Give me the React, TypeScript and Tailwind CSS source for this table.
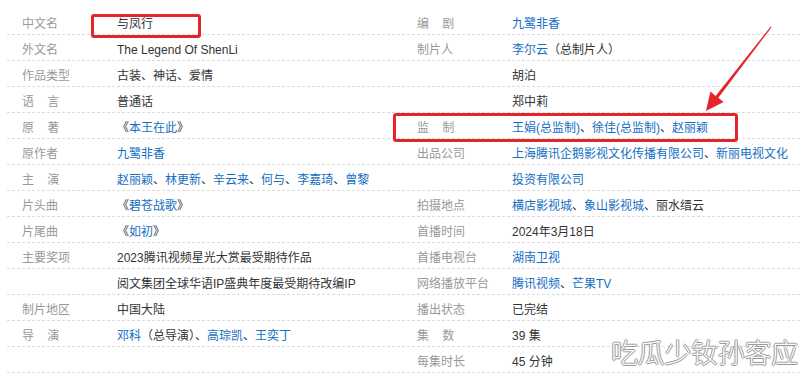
import React from "react";

type Seg = { t: string; link?: boolean };
type Row = { label?: string; value?: Seg[] };

const L = (t: string): Seg => ({ t, link: true });
const T = (t: string): Seg => ({ t });

const sp = "\u00a0\u00a0\u00a0\u00a0";

const left: Row[] = [
  { label: "中文名", value: [T("与凤行")] },
  { label: "外文名", value: [T("The Legend Of ShenLi")] },
  { label: "作品类型", value: [T("古装、神话、爱情")] },
  { label: `语${sp}言`, value: [T("普通话")] },
  { label: `原${sp}著`, value: [T("《"), L("本王在此"), T("》")] },
  { label: "原作者", value: [L("九鹭非香")] },
  {
    label: `主${sp}演`,
    value: [
      L("赵丽颖"), T("、"), L("林更新"), T("、"), L("辛云来"), T("、"), L("何与"), T("、"), L("李嘉琦"), T("、"), L("曾黎"),
    ],
  },
  { label: "片头曲", value: [T("《"), L("碧苍战歌"), T("》")] },
  { label: "片尾曲", value: [T("《"), L("如初"), T("》")] },
  { label: "主要奖项", value: [T("2023腾讯视频星光大赏最受期待作品")] },
  { value: [T("阅文集团全球华语IP盛典年度最受期待改编IP")] },
  { label: "制片地区", value: [T("中国大陆")] },
  {
    label: `导${sp}演`,
    value: [L("邓科"), T("（总导演）、"), L("高琮凯"), T("、"), L("王奕丁")],
  },
  {},
];

const right: Row[] = [
  { label: `编${sp}剧`, value: [L("九鹭非香")] },
  { label: "制片人", value: [L("李尔云"), T("（总制片人）")] },
  { value: [T("胡泊")] },
  { value: [T("郑中莉")] },
  {
    label: `监${sp}制`,
    value: [L("王娟(总监制)"), T("、"), L("徐佳(总监制)"), T("、"), L("赵丽颖")],
  },
  {
    label: "出品公司",
    value: [L("上海腾讯企鹅影视文化传播有限公司"), T("、"), L("新丽电视文化")],
  },
  { value: [L("投资有限公司")] },
  {
    label: "拍摄地点",
    value: [L("横店影视城"), T("、"), L("象山影视城"), T("、丽水缙云")],
  },
  { label: "首播时间", value: [T("2024年3月18日")] },
  { label: "首播电视台", value: [L("湖南卫视")] },
  { label: "网络播放平台", value: [L("腾讯视频"), T("、"), L("芒果TV")] },
  { label: "播出状态", value: [T("已完结")] },
  { label: `集${sp}数`, value: [T("39 集")] },
  { label: "每集时长", value: [T("45 分钟")] },
];

function Column({ rows, width }: { rows: Row[]; width: string }) {
  return (
    <div className={`flex flex-col ${width}`}>
      {rows.map((r, i) => (
        <div
          key={i}
          className="flex h-[26px] items-start border-b border-dashed border-[#dcdcdc] pl-[15px] leading-[30px] whitespace-nowrap"
        >
          <div className="w-[95px] shrink-0 text-[#999999]">{r.label ?? ""}</div>
          <div className="text-[#333333]">
            {(r.value ?? []).map((s, j) =>
              s.link ? (
                <span key={j} className="text-[#136ec2]">
                  {s.t}
                </span>
              ) : (
                <span key={j}>{s.t}</span>
              )
            )}
          </div>
        </div>
      ))}
    </div>
  );
}

export default function App() {
  return (
    <div
      className="relative h-[385px] w-[811px] overflow-hidden bg-white text-[12px]"
      style={{ fontFamily: '"Liberation Sans", "Noto Sans CJK SC", sans-serif' }}
    >
      <div className="flex gap-[2px] pl-[7px] pt-[9px]">
        <Column rows={left} width="w-[393px]" />
        <Column rows={right} width="w-[398px]" />
      </div>

      {/* red highlight boxes */}
      <div className="absolute left-[91px] top-[14px] h-[24px] w-[110px] rounded-[3px] border-[3px] border-[#e4262b]" />
      <div className="absolute left-[393px] top-[113px] h-[29px] w-[345px] rounded-[3px] border-[3px] border-[#e4262b]" />

      {/* arrow */}
      <svg className="absolute left-0 top-0" width="811" height="385" viewBox="0 0 811 385">
        <polygon
          points="770.6,26.7 715.6,95.9 710.4,91.6 706,111 723.6,101.9 718.4,97.7 771.6,27.3"
          fill="#e4262b"
        />
      </svg>

      {/* watermark */}
      <div
        className="absolute left-[611px] top-[334px] text-[27px] leading-[36px] tracking-[-0.3px] text-[#fbfbfb] [text-shadow:1px_0_#9a9a9a,-1px_0_#9a9a9a,0_1px_#9a9a9a,0_-1px_#9a9a9a]"
        style={{ fontFamily: '"Noto Sans CJK SC", sans-serif', fontWeight: 300 }}
      >
        吃瓜少钕孙客应
      </div>
    </div>
  );
}
